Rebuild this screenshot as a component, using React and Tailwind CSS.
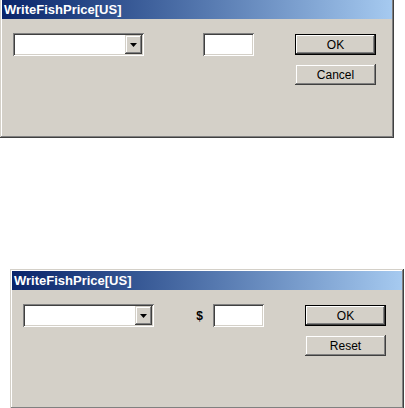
import React from 'react';

const sunken =
  'shadow-[inset_1px_1px_#808080,inset_-1px_-1px_#ffffff,inset_2px_2px_#404040,inset_-2px_-2px_#d4d0c8]';
const raised =
  'shadow-[inset_-1px_-1px_#404040,inset_1px_1px_#d4d0c8,inset_-2px_-2px_#808080,inset_2px_2px_#ffffff]';

const Button = ({ label, isDefault }) => (
  <button
    className={
      'w-[81px] h-[21px] bg-[#d4d0c8] text-[12px] text-black leading-none flex items-center justify-center ' +
      (isDefault
        ? 'shadow-[inset_0_0_0_1px_#000000,inset_-2px_-2px_#404040,inset_2px_2px_#ffffff,inset_-3px_-3px_#808080]'
        : raised)
    }
  >
    {label}
  </button>
);

const Dialog = ({ secondLabel, showDollar, className }) => (
  <div className={'w-[394px] h-[140px] bg-[#d4d0c8] p-[2px] flex flex-col ' + raised + ' ' + className}>
    <div className="h-[19px] shrink-0 bg-gradient-to-r from-[#0a246a] to-[#a6caf0] flex items-center pl-[2px]">
      <span className="text-white font-bold text-[13px] leading-none">WriteFishPrice[US]</span>
    </div>
    <div className="flex items-start pl-[11px] pt-[14px]">
      {/* combo box */}
      <div className={'w-[131px] h-[23px] bg-white flex justify-end p-[2px] ' + sunken}>
        <div className={'w-[17px] h-full bg-[#d4d0c8] flex items-center justify-center ' + raised}>
          <svg width="7" height="4" viewBox="0 0 7 4">
            <path d="M0 0h7L3.5 4z" fill="#000" />
          </svg>
        </div>
      </div>
      <div className="w-[110px] flex items-center justify-end">
        {showDollar && <span className="text-[12px] font-bold mr-[10px] leading-none">$</span>}
        <div className={'w-[51px] h-[23px] bg-white ' + sunken} />
      </div>
      <div className="ml-[41px] pt-px flex flex-col gap-[9px]">
        <Button label="OK" isDefault />
        <Button label={secondLabel} />
      </div>
    </div>
  </div>
);

export default function App() {
  return (
    <div className="w-[405px] h-[408px] bg-white overflow-hidden font-['Liberation_Sans',Arial,sans-serif]">
      <Dialog secondLabel="Cancel" className="-mt-[2px]" />
      <Dialog secondLabel="Reset" showDollar className="mt-[131px] ml-[10px]" />
    </div>
  );
}
